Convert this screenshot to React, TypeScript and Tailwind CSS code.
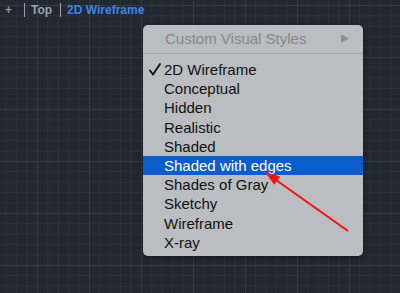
const items = [
  "2D Wireframe",
  "Conceptual",
  "Hidden",
  "Realistic",
  "Shaded",
  "Shaded with edges",
  "Shades of Gray",
  "Sketchy",
  "Wireframe",
  "X-ray",
];

export default function App() {
  return (
    <div
      className="relative h-[293px] w-[400px] overflow-hidden bg-[#212830] font-['Liberation_Sans',Arial,sans-serif] bg-[linear-gradient(to_right,#323b47_1px,transparent_1px),linear-gradient(to_bottom,#323b47_1px,transparent_1px),linear-gradient(to_right,#29313b_1px,transparent_1px),linear-gradient(to_bottom,#29313b_1px,transparent_1px)] bg-[size:52px_52px,52px_52px,10.4px_10.4px,10.4px_10.4px] bg-[position:37px_5px,37px_5px,5.8px_5px,5.8px_5px]"
    >
      {/* viewport label bar */}
      <div className="flex h-[19px] items-center pl-[5px] text-[12px] font-bold leading-none">
        <span className="w-[12px] text-[#8d939a]">+</span>
        <span className="ml-[7px] h-[14px] w-px bg-[#9aa0a7]" />
        <span className="ml-[6px] text-[#9aa1a8]">Top</span>
        <span className="ml-[8px] h-[14px] w-px bg-[#9aa0a7]" />
        <span className="ml-[6px] text-[#3f83e6]">2D Wireframe</span>
      </div>

      {/* visual styles popup */}
      <div className="absolute left-[143px] top-[25px] w-[220px] rounded-[5px] bg-[#babdc1] pb-[4px] pt-[3px] text-[15px] leading-none shadow-[0_2px_6px_rgba(0,0,0,0.35)]">
        <div className="flex h-[20px] items-center justify-between pl-[22px] pr-[14px] text-[#85878b]">
          <span>Custom Visual Styles</span>
          <svg width="8" height="9" viewBox="0 0 8 9">
            <polygon points="0,0 8,4.5 0,9" fill="#8e9094" />
          </svg>
        </div>
        <div className="mt-[5px] h-px bg-[#a3a6aa]" />
        <div className="mt-[6px]">
          {items.map((item, i) => (
            <div
              key={item}
              className={[
                "flex h-[19.2px] items-center pl-[6px]",
                item === "Shaded with edges" ? "bg-[#0b5dcc] text-white" : "text-[#121212]",
              ].join(" ")}
            >
              <span className="flex w-[15px] items-center">
                {i === 0 ? (
                  <svg width="12" height="13" viewBox="0 0 12 13">
                    <path d="M1 7.5 L4 11.5 L11 1" fill="none" stroke="#121212" strokeWidth="1.9" strokeLinecap="round" strokeLinejoin="round" />
                  </svg>
                ) : null}
              </span>
              <span>{item}</span>
            </div>
          ))}
        </div>
      </div>

      {/* annotation arrow */}
      <svg className="pointer-events-none absolute left-0 top-0" width="400" height="293" viewBox="0 0 400 293">
        <line x1="348" y1="231" x2="276" y2="180" stroke="#f31212" strokeWidth="2" />
        <polygon points="265,172 274.3,184.8 280.1,176.6" fill="#f31212" />
      </svg>
    </div>
  );
}
